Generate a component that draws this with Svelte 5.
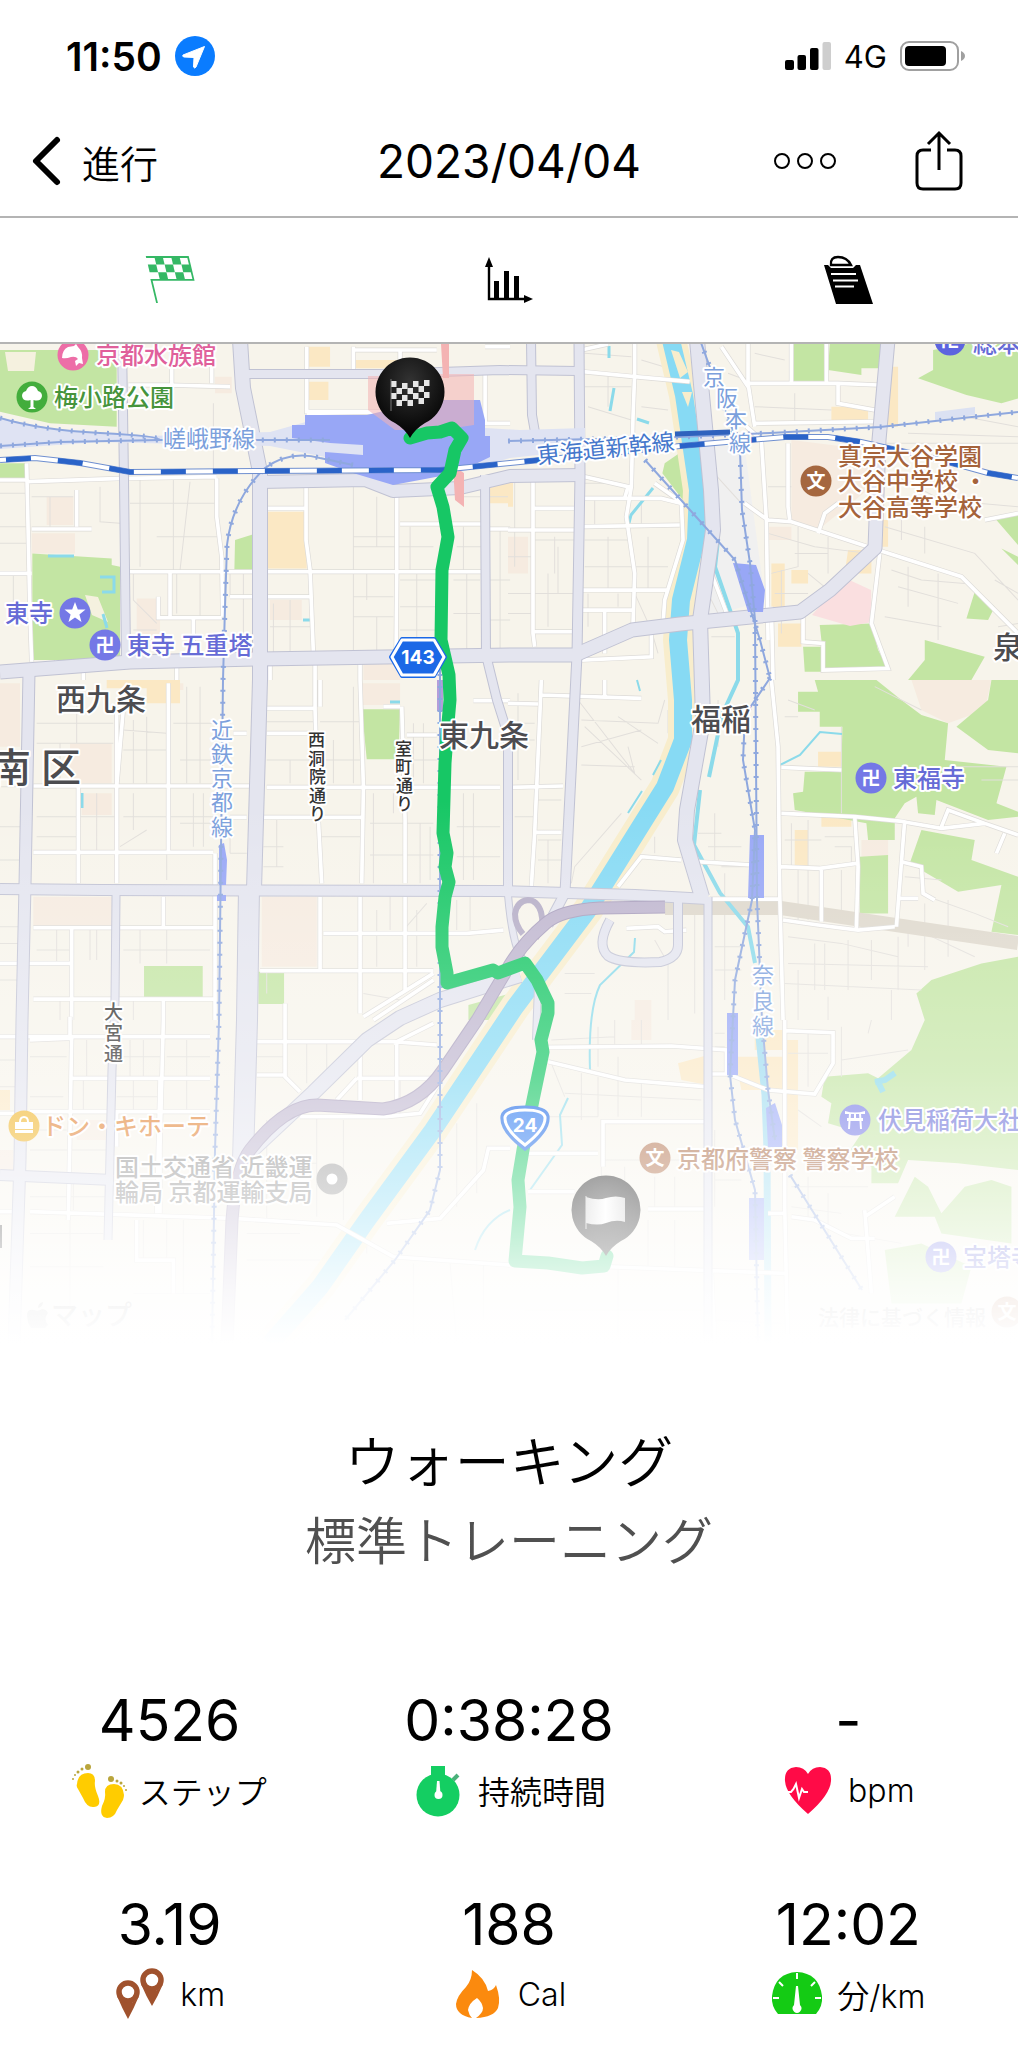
<script lang="ts">
	interface Label {
		text: string
		x: number
		cy: number
		tone: string
		size?: number
	}

	// six survey tiles, drawn at three units per map pixel
	const tiles = [
		{
			x: 0,
			y: 340,
			tint: 'M140 470H220V555H140ZM95 580H225V640H95ZM645 110H695V160H645ZM410 775H480V900H410ZM810 780H905V840H810ZM1090 960H1200V1020H1090Z',
			sand: 'M800 515H920V685H800ZM920 20H990V80H920ZM920 125H985V180H920ZM1060 60H1190V85H1060ZM1465 425H1530V490H1465Z',
			park: 'M0 30H350V260L150 250 0 215ZM0 370H75V418H0ZM97 640L335 655V675L360 680V960H97ZM705 600L760 583V688H703Z',
			lane: 'M0 460H80M150 470V560M95 470H220M300 440V545L360 550M420 420V680M520 420V690M570 425L540 690M640 190V400M385 290H700M385 200H500M390 490H650M470 590H660M1060 440V690M1130 470V620M1060 620H1300M1230 560V690M1060 590H1190M1370 470H1530M1390 560V690M1370 620H1450M1060 700V940M1060 770H1180M1100 700V780M1060 830H1180M1130 830V940M1200 720H1310M1200 800H1310M1200 870H1310M1250 700V940M1360 720H1440M1360 820H1440M1400 690V930M400 700V780L470 850M400 870H470M530 700V820M600 700V830M690 700V770M730 700V940M820 790V940M870 780V940M810 860H930M0 560H90M0 610H90M40 700V830M1470 720H1530M1470 840H1530M1500 570V930',
			street:
				'M0 420H80M80 370L90 830 95 965M80 425L370 415M230 450V560M95 567H275M0 700H95M385 415L650 410M650 415V530L665 650 668 830M515 20V150M635 20V130M385 135H500L690 140M510 695V830M580 830V955M475 770V833H665M385 695H1445M690 770H930M800 505H918M918 440V600L930 690 940 940M1190 460V700L1188 940M1200 552H1445M1465 567H1530M920 30V215H1140M920 110V20M1060 20V90M1060 30H1310M1200 30V90M920 220L1190 215M1455 100V250H1530M1455 20H1530M170 960V995M530 955V1020M250 960V1020M810 955V1020M945 940V1020M1080 940V1020'
		},
		{
			x: 508,
			y: 340,
			tint: 'M850 300L1090 330V440L930 570 850 540ZM0 590H60V700H0ZM780 560H850V600H780Z',
			sand: 'M970 200H1080V250H970ZM1125 80H1170V260H1130ZM1090 540H1140V620H1090ZM1020 630H1090V700H1010ZM790 670H830V820H790ZM850 690H900V730H850ZM810 850H880V920H810ZM0 420H15V500H0Z',
			park: 'M850 12H950V130H845ZM965 12H1125V85H1060V105L960 90ZM1275 30L1380 12H1530V175L1480 190 1375 165 1230 115 1275 90ZM520 335L540 500 463 400 470 370ZM1465 540L1530 525V615ZM1480 625L1530 650V675ZM1400 755L1460 800 1440 840 1375 835ZM935 855L1090 850 1110 930 1140 985 945 985 940 900ZM885 920H940V995H890ZM1250 900L1430 950 1390 1020H1200L1250 960Z',
			lane: 'M230 40L370 50M240 200L370 240M230 140H370M300 100V200M400 60L500 90M400 200L480 210M20 420V680M80 600H200M140 590V700M0 650H70M230 600H370M260 480V560M300 590V750M230 680H480M420 590V750M400 480V560M230 430H340M240 760V860M330 760V800M380 760L430 870 450 940M600 380L700 490M740 40L830 60M740 200L970 210M860 160V250M780 440H850M780 580L920 620 1080 640M870 560V680L790 700M960 590V700M1150 400L1300 480 1530 500M1180 520V600M1250 560V640M1130 560L1400 640 1530 780M1150 690L1240 720 1370 730M1170 740L1350 790M1200 680V800M1290 700V900M1130 830L1300 860M860 640H960M800 760H900M820 690V880M1200 280L1530 290M1370 230L1530 260M1130 310H1530M0 760H200M0 820H70M120 700V860M150 620V760M660 100L740 130M600 760L650 860M610 890H680M900 700L1010 790M1460 720L1530 760M1470 860L1530 850',
			street:
				'M220 30L300 12M225 95L380 110 545 125M380 12V100L375 230 370 440 355 530 380 700 375 850M720 12V130L740 260M720 130H990L1110 135M850 12V130M955 12V130M990 135V190L1100 210M740 250L1100 245M640 20L720 140M715 260L760 300 775 540 780 900M840 310V500L845 540M230 410L360 440 350 475M230 475H460L520 490 525 600 470 780 465 850M440 430L525 490M220 560L515 555M0 570H200M80 505H210M75 410V880L80 920M220 750H475M220 810H375M80 875H200M290 810V940M220 960L430 950 430 870M710 490L780 540 850 545 1110 630 1360 710 1440 790 1530 880M930 580L950 520 990 490M1115 640L1090 850 1140 985 945 990V910L885 905V830M790 800L795 1020M610 700L660 830M1430 540L1530 520'
		},
		{
			x: 0,
			y: 680,
			tint: 'M0 10H60V200H0ZM210 190H335V310H210ZM245 340H335V405H245ZM100 650H335V740H100ZM785 650H950V860H785ZM1085 10H1200V75H1085ZM500 10H550V30H500ZM1365 880H1460V910H1365Z',
			sand: 'M320 0H440V25H320ZM440 0H540V70H440Z',
			park: 'M1085 88H1200L1195 238H1100ZM432 858H608V955H432ZM775 875H852V972H775ZM1405 975L1530 940V1020H1405Z',
			lane: 'M0 320H60M0 440H60M0 540H60M110 130H340M110 190H340M180 190V310M230 30V190M110 410H345M290 340V510M110 470H230M370 150L500 160M370 210H500M400 120V310M440 110V310M560 20V310M600 20V310M540 240H650M520 130H650M370 410H640M580 340V500M610 340V500M540 430H640M440 450L360 500M400 340V450M500 520V600M690 520H740M690 410V520M800 125H940M800 240H940M870 240V310M1000 180V310M1060 20V310M960 125H1080M960 240H1080M960 470H1080M830 420V560M790 560H850M790 500H850M1120 340V610M1180 340V400M1110 430H1300M1110 525H1300M1260 430V610M1290 440V600M1390 340V600M1420 340V600M1370 440H1500M1370 530H1500M1240 130V310M1270 130V310M1230 240H1310M1130 690V860M1170 650V750M1250 690V860M1370 660V750M1410 650V750M1210 750L1280 670M170 750V850M270 750V840M290 750V840M110 810H210M420 750V850M500 750V850M370 810H630M180 960V1020M400 960V1020M0 740H60M0 790H60M0 900H60M1090 940L1200 960M800 940V870',
			street:
				'M100 318H750M800 322H1500M235 320V610M350 90V610M505 10V515M370 85L350 320M100 517H640M645 520V1020M790 85H940M945 0V90L955 420 965 610M1080 0L1090 320 1085 610M1205 80L1215 420V610M800 160H945M790 412H1085M690 412H740M700 160H740M1220 165H1310M1420 62H1530M100 743H640M0 850H210M215 745V1020M490 650V740M100 957H640M490 960V1020M960 650V870M1080 650V1000M1215 650V930M970 760H1400L1510 750M780 872H1300M1090 1010L1300 880M1120 1020L1300 900M855 970V1020M960 0V80M1150 80H1200'
		},
		{
			x: 508,
			y: 680,
			tint: 'M1210 0H1450L1430 90 1320 130 1240 90ZM1470 0H1530V50H1490ZM1060 480H1140V530H1060ZM380 960H430V1020H380Z',
			sand: 'M930 215H1000V260H930ZM860 450H900V560H860ZM940 400H1030V440H940Z',
			park: 'M920 0H1105L1180 60 1240 105 1320 130 1310 240 1495 260 1465 370 1530 395V410L1440 420 1285 360 1280 405 1230 400 1225 350 1190 370 1160 415V480H1080L1075 430 860 390 855 340 885 335 890 275H1000L1003 140H935V95H870V35H930ZM1450 0H1530V220L1440 210 1345 140 1440 60ZM1240 450L1400 480 1390 540 1530 590V765L1450 755 1480 615 1350 635 1205 550ZM1055 530L1140 525V700H1055ZM1270 900L1420 850 1530 830V1020H1250L1225 940Z',
			lane: 'M220 120L450 130 470 60M220 200L400 150M210 60L380 280 360 200M230 140L400 300M220 255L380 260M330 110L450 190M340 400L200 560 190 610M90 480H160M90 540H160M90 360H160M120 480V610M30 40V300M20 180H80M20 130H80M20 410H80M570 460H640M620 400V540M600 500H700M650 580V650M640 560H720M440 470V520M850 430V560M900 420V560M830 480H940M950 470H1040M980 500H1030V550M870 570V720M900 570V720M1000 570V720M1190 590L1300 600M1260 650L1400 700 1500 740M1250 670V870M1320 660V830M1200 750V800M1250 760L1400 830M840 770L1000 790 1170 830M920 790V930M950 790V930M1020 780V930M1090 780V900M1170 770V930M840 850L1260 860M830 910L1240 930M870 870V1020M960 950V1020M1150 930V1020M560 690V1000M650 700V960M620 800H700M620 870H700M170 880H260M170 940H250M440 780L480 850 480 1020M840 60L920 90M1340 260H1530M1420 300H1530M1100 20L1240 90M830 110H870M1000 140V400M630 60V200M480 90V160',
			street:
				'M0 70L90 72M100 0L80 460 70 620M100 45L400 55M290 0V50M10 322L165 318M80 457H160M330 620L400 530 520 540M565 545L735 555M605 657H810M790 0L810 200 815 640 825 1020M820 262L1000 270M820 400L1040 410 1190 425M1040 410L1050 560 1045 745M815 560L935 565 1045 550M940 570V725M825 720L930 735 1050 750 1160 740M1190 420L1165 740M1185 425L1300 445 1430 430 1320 390 1300 440M1430 430L1530 465M1490 460L1465 520M1180 545L1240 560 1245 640 1280 660M1170 655H1230M355 745L450 740 470 755 535 750'
		},
		{
			x: 0,
			y: 1020,
			tint: 'M0 390H40V460H0ZM230 300H320V360H230Z',
			sand: 'M0 210H30V270H0Z',
			park: '',
			lane: 'M0 120H50M0 200H50M90 110H200M260 60V170M390 60V170M430 60V170M350 110H480M500 110H630M560 60V170M90 230H190M250 180V280M350 230H480M400 180V280M560 180V280M770 110H850M920 70V190M980 70V160M1080 70H1280M1200 180V280M950 290V590M770 430H950M800 300V600M1030 300V600M1370 310V560M1430 250V520M90 330H200M90 390H320M90 530H320M220 490V570M430 600V720M500 600V720M550 600V820M90 640H310M90 740H310M210 590V900M400 820H630M1240 730V980M1350 730L1370 970M1450 730V900M1100 600V700M740 640H900M740 720H960',
			street:
				'M0 50H630M90 60L210 55V-10M215 55L205 600M490 0L480 380M210 175H630M480 180L470 580M770 65H1180L1310 75M855 0V170L900 215M770 165H850M900 290L1160 290 1260 280 1310 200M1080 70V240M1190 70V280M1070 175H1290M1010 240L1070 175M1180 70L1300 10M0 280H50M90 275H630M90 575L700 595 1010 615 1180 710 1530 735M0 575H50M410 600V720H520V820M1160 610L1320 595 1450 450 1465 385H1530M350 380V280M480 380V580'
		},
		{
			x: 508,
			y: 1020,
			tint: 'M370 0H430V60H370Z',
			sand: 'M510 130L600 105V195L520 180ZM680 110H830V210H700ZM830 60H870V390H830ZM740 30H830V90H740Z',
			park: 'M1250 0H1530V450L1350 430 1200 420 1170 490H1090V440L1020 400 1060 340 960 310 970 250 940 230 950 170 1080 160 1110 175 1210 90ZM1220 470L1260 500 1300 580 1370 500 1450 480 1510 500V670L1300 640 1280 590 1160 590ZM1130 690L1240 670 1390 740 1360 850H1150Z',
			lane: 'M130 60L320 50M320 0V80M270 20V140M400 0V80M130 130L170 230M220 160V300M270 170V290M330 110V290M400 190V290M170 220L580 240M280 310V560M120 290H270M620 40H650M620 80H650M840 100H960M900 40V200M1000 20V170M1000 120L1200 90M870 270L940 320M290 420H580M350 440V560M440 470V560M500 470V560M330 750V960M420 600V740M500 600V740M850 500H1080M900 470V600M960 520V650M850 560L1000 580M1010 640L1180 670M620 480H700M620 330V560M620 900L820 910M50 870H580M1080 40L1090 0',
			street:
				'M120 82L490 78 655 90V160L780 210 920 222 975 130V38L830 32M120 125L350 180 590 200M610 162H660M600 305H285V440M60 400H270M60 515L200 515M420 567H590M300 740L830 760M830 0V560L840 1020M780 580H830M1070 590L1160 530M1070 570L1090 820M850 590L920 600 1030 655H1100M610 750L620 960'
		}
	]

	const roads = [
		{ w: 14, d: 'M240 340L243 388 260 472 260 680 254 890' },
		{ w: 20, d: 'M249 888L247 1020 243 1160' },
		{ w: 8, d: 'M122 340L124 480 126 660' },
		{ w: 13, d: 'M0 672L130 662 260 659 510 655 575 655 632 630 680 624 800 612 830 590 875 548 879 440 888 340' },
		{ w: 8, d: 'M248 374L380 374 500 370 578 371' },
		{ w: 12, d: 'M260 482L365 480 393 491 460 488 510 476 582 475' },
		{ w: 8, d: 'M531 340L532 415 536 438M485 475L486 655 497 700 508 735 508 891' },
		{ w: 9, d: 'M579 340L580 475 577 655 565 893 548 925' },
		{ w: 14, d: 'M697 340L702 395 711 490 713 530 700 620 703 720 687 810 685 840 702 897' },
		{ w: 7, d: 'M708 897V1344' },
		{ w: 11, d: 'M29 672L25 885 22 1020 20 1160 14 1344' },
		{ w: 10, d: 'M0 889L100 890 500 891 635 895 708 899' },
		{ w: 7, d: 'M116 895L115 1000 112 1070 108 1240' },
		{ w: 10, d: 'M0 1175L113 1180' },
		{ w: 14, d: 'M520 975L440 1000 400 1018 367 1040 313 1093 250 1152' },
		{ w: 8, d: 'M610 920Q596 945 608 956 620 964 660 962 678 958 678 945L678 902' },
		{ w: 6, d: 'M508 895Q512 940 520 955L538 985 536 1040' }
	]

	const rails = [
		'M0 418Q40 430 100 433T160 440H330',
		'M0 446L60 442 160 440',
		'M353 465L320 458Q290 450 265 468 232 500 227 545L225 607 223 680 221 850 219 1020 215 1150 212 1344',
		'M508 441L680 437 770 433 880 427 1018 412',
		'M645 460L690 510 735 560 760 640 770 678',
		'M700 340L740 450 742 510 750 563 755 620 757 900 762 1020 768 1090 775 1140',
		'M770 678L745 715 743 760 755 830 752 900 735 980 730 1075 735 1120 755 1190 758 1344',
		'M790 1175L862 1290',
		'M440 650L440 1170 430 1210 395 1260 345 1320'
	]
	const shinkansen =
		'M0 460L35 458 80 463 130 472 260 471 440 470 510 463 680 446 785 437 828 437 861 442 941 460 988 473 1018 478'
	const river =
		'M671 340L684 395 698 490 696 540 681 600 678 640 683 700 683 740 665 787 615 867 588 910 515 1007 433 1130 367 1220 320 1287 270 1344'
	const expressway =
		'M665 907L600 908Q560 910 545 924 520 945 505 973L477 1020 443 1070Q420 1104 383 1109L317 1105Q285 1105 250 1150 236 1168 232 1220L227 1344'
	const loop = 'M536 938Q545 925 541 912 537 900 528 900 517 901 515 914 515 925 523 934'
	const route =
		'M410 438L427 433 440 432 452 428 462 438 455 450 450 473 437 487 443 507 448 537 442 570 441 640 449 675 450 700 448 723 445 763 443 833 447 853 445 867 449 882 445 897 442 927 442 947 447 973 447 983 493 970 498 973 525 963 537 980 548 1003 548 1013 541 1040 543 1052 533 1100 523 1150 518 1180 520 1207 515 1261 548 1263 582 1268 604 1266 607 1256'

	const labels: Label[] = [
		{ text: '京都水族館', x: 96, cy: 355, tone: 'pink' },
		{ text: '梅小路公園', x: 54, cy: 397, tone: 'green' },
		{ text: '嵯峨野線', x: 163, cy: 438, tone: 'rail', size: 23 },
		{ text: '東寺', x: 5, cy: 613, tone: 'violet' },
		{ text: '東寺 五重塔', x: 127, cy: 645, tone: 'violet' },
		{ text: '東福寺', x: 893, cy: 778, tone: 'violet' },
		{ text: '伏見稲荷大社', x: 878, cy: 1120, tone: 'violet' },
		{ text: '宝塔寺', x: 963, cy: 1257, tone: 'violet' },
		{ text: '総本山', x: 973, cy: 343, tone: 'violet' },
		{ text: '真宗大谷学園', x: 838, cy: 456, tone: 'brown' },
		{ text: '大谷中学校 ・', x: 838, cy: 481, tone: 'brown' },
		{ text: '大谷高等学校', x: 838, cy: 507, tone: 'brown' },
		{ text: '京都府警察 警察学校', x: 677, cy: 1159, tone: 'brown' },
		{ text: 'ドン・キホーテ', x: 42, cy: 1126, tone: 'orange' },
		{ text: '国土交通省 近畿運', x: 115, cy: 1167, tone: 'grey' },
		{ text: '輪局 京都運輸支局', x: 115, cy: 1192, tone: 'grey' },
		{ text: '西九条', x: 56, cy: 699, tone: 'area', size: 30 },
		{ text: '東九条', x: 439, cy: 735, tone: 'area', size: 30 },
		{ text: '福稲', x: 691, cy: 719, tone: 'area', size: 30 },
		{ text: '泉', x: 993, cy: 647, tone: 'area', size: 30 },
		{ text: '南', x: -9, cy: 767, tone: 'area', size: 40 },
		{ text: '区', x: 41, cy: 767, tone: 'area', size: 40 },
		{ text: 'マップ', x: 51, cy: 1315, tone: 'credit', size: 27 },
		{ text: '法律に基づく情報', x: 818, cy: 1317, tone: 'credit', size: 21 }
	]

	// x and y lists place each character of a label that follows its line
	const lineLabels = [
		{ text: '近鉄京都線', x: '211 211 211 211 211', y: '738 762 786 810 835', tone: 'rail', size: 22 },
		{ text: '奈良線', x: '752 752 752', y: '983 1009 1034', tone: 'rail', size: 22 },
		{ text: '京阪本線', x: '703 716 725 729', y: '385 406 427 451', tone: 'rail', size: 22 },
		{ text: '西洞院通り', x: '308 308 309 309 309', y: '746 765 783 802 820', tone: 'lane-name', size: 17 },
		{ text: '室町通り', x: '395 395 396 396', y: '755 773 792 810', tone: 'lane-name', size: 17 },
		{ text: '大宮通', x: '104 104 104', y: '1019 1040 1061', tone: 'lane-name', size: 19 }
	]

	const places = [
		{ x: 73, y: 355, icon: 'dolphin', fill: '#ed6ea7' },
		{ x: 32, y: 397, icon: 'tree', fill: '#43ad3c' },
		{ x: 75, y: 613, icon: 'star', fill: '#7478e6' },
		{ x: 105, y: 645, icon: '卍', fill: '#7478e6' },
		{ x: 871, y: 778, icon: '卍', fill: '#7478e6' },
		{ x: 941, y: 1257, icon: '卍', fill: '#7478e6' },
		{ x: 950, y: 340, icon: '卍', fill: '#5d64df' },
		{ x: 816, y: 481, icon: '文', fill: '#a5673f' },
		{ x: 655, y: 1158, icon: '文', fill: '#b06e48' },
		{ x: 1007, y: 1312, icon: '文', fill: '#b06e48' },
		{ x: 855, y: 1120, icon: 'torii', fill: '#7478e6' },
		{ x: 24, y: 1126, icon: 'bag', fill: '#f0b323' },
		{ x: 332, y: 1179, icon: 'dot', fill: '#999' }
	]

	const stats = [
		{ value: '4526', unit: 'ステップ', icon: 'steps' },
		{ value: '0:38:28', unit: '持続時間', icon: 'watch' },
		{ value: '-', unit: 'bpm', icon: 'heart' },
		{ value: '3.19', unit: 'km', icon: 'pins' },
		{ value: '188', unit: 'Cal', icon: 'flame' },
		{ value: '12:02', unit: '分/km', icon: 'gauge' }
	]

	const checks = [0, 1, 2].flatMap((row) => [0, 1, 2, 3, 4].map((col) => ({ row, col })).filter((c) => (c.row + c.col) % 2))
	const pinChecks = [0, 1, 2, 3].flatMap((row) => [0, 1, 2, 3, 4, 5, 6].map((col) => ({ row, col })).filter((c) => (c.row + c.col) % 2 === 0))
	const wave = [0, 1, 2, 1, 0, -1, -1]

	let tab = $state('course')
</script>

<div class="screen">
	<div class="status">
		<div class="status-side">
			<span class="clock">11:50</span>
			<svg width="40" height="40" viewBox="0 0 40 40" aria-hidden="true">
				<circle cx="20" cy="20" r="20" fill="#0a7cff" />
				<path d="M29.500 10.500L8 19Q7 20.500 9 21L19 21.500 18.500 31Q19.500 33 21 31Z" fill="#fff" stroke="#fff" stroke-linejoin="round" />
			</svg>
		</div>
		<div class="status-side">
			<svg width="46" height="30" viewBox="0 0 46 30" aria-hidden="true">
				<rect x="0" y="19" width="9" height="10" rx="2" />
				<rect x="12.500" y="14" width="8.500" height="15" rx="2" />
				<rect x="25" y="7" width="8.500" height="22" rx="2" />
				<rect x="37.500" y="1" width="8.500" height="28" rx="2" fill="#cecece" />
			</svg>
			<span class="network">4G</span>
			<svg width="66" height="32" viewBox="0 0 66 32" aria-hidden="true">
				<rect x="1" y="2" width="57" height="28" rx="8" fill="none" stroke="#a0a0a0" stroke-width="2" />
				<rect x="5" y="6" width="41" height="20" rx="4" />
				<path d="M61 11Q65 13 65 16T61 21Z" fill="#a0a0a0" />
			</svg>
		</div>
	</div>

	<header class="nav">
		<button class="back" type="button">
			<svg width="28" height="48" viewBox="0 0 28 48" aria-hidden="true">
				<path d="M25 3L4 24 25 45" fill="none" stroke="#000" stroke-width="6" stroke-linecap="round" stroke-linejoin="round" />
			</svg>
			進行
		</button>
		<h1>2023/04/04</h1>
		<div class="actions">
			<button type="button" aria-label="その他">
				<svg width="64" height="20" viewBox="0 0 64 20" fill="none" stroke="#000" stroke-width="2" aria-hidden="true">
					<circle cx="9" cy="10" r="7" />
					<circle cx="32" cy="10" r="7" />
					<circle cx="55" cy="10" r="7" />
				</svg>
			</button>
			<button type="button" aria-label="共有">
				<svg width="48" height="60" viewBox="0 0 48 60" fill="none" stroke="#000" stroke-width="3" aria-hidden="true">
					<path d="M16 19H8Q2 19 2 25V52Q2 58 8 58H40Q46 58 46 52V25Q46 19 40 19H32" />
					<path d="M24 39V2M13 13L24 2 35 13" />
				</svg>
			</button>
		</div>
	</header>

	<nav class="tabs">
		<button type="button" aria-label="コース" aria-pressed={tab === 'course'} onclick={() => (tab = 'course')}>
			<svg width="50" height="50" viewBox="0 0 50 50" aria-hidden="true">
				<g transform="matrix(1 0 .24 1 1 2)" fill="#35b865">
					{#each checks as c}
						<rect x={c.col * 8.4} y={c.row * 7.6} width="8.400" height="7.600" />
					{/each}
					<path d="M0 0H42V22.800H0V46" fill="none" stroke="#35b865" stroke-width="1.800" />
				</g>
			</svg>
		</button>
		<button type="button" aria-label="グラフ" aria-pressed={tab === 'chart'} onclick={() => (tab = 'chart')}>
			<svg width="50" height="50" viewBox="0 0 50 50" aria-hidden="true">
				<path d="M5 8V44H42" fill="none" stroke="#000" stroke-width="2.400" />
				<path d="M5 2L1 12H9ZM49 44L40 40V48ZM10 26H15V44H10ZM20 16H25V44H20ZM30 21H35V44H30Z" />
			</svg>
		</button>
		<button type="button" aria-label="メモ" aria-pressed={tab === 'notes'} onclick={() => (tab = 'notes')}>
			<svg width="50" height="50" viewBox="0 0 50 50" aria-hidden="true">
				<path d="M1 10L5 10 8 13H30L33 10H37L50 49H13Z" />
				<path d="M8 10Q7 2 15 2 24 2 28 10Z" fill="#fff" stroke="#000" stroke-width="2.400" />
				<path d="M8 19H33M10 25.500H35M12 31.500H31" stroke="#fff" stroke-width="2" />
			</svg>
		</button>
	</nav>

	<svg class="map" viewBox="0 344 1018 1000" role="img" aria-label="コースの地図">
		<defs>
			<linearGradient id="fade" gradientUnits="userSpaceOnUse" x1="0" y1="800" x2="0" y2="1344">
				<stop offset="0" stop-color="#fff" stop-opacity="0" />
				<stop offset="0.500" stop-color="#fff" stop-opacity="0.340" />
				<stop offset="0.740" stop-color="#fff" stop-opacity="0.660" />
				<stop offset="0.900" stop-color="#fff" stop-opacity="0.900" />
				<stop offset="1" stop-color="#fff" />
			</linearGradient>
			<radialGradient id="ball" cx="0.500" cy="0.300" r="0.700">
				<stop offset="0" stop-color="#333" />
				<stop offset="1" stop-color="#000" />
			</radialGradient>
			<linearGradient id="cloth">
				<stop offset="0" stop-color="#ccc" />
				<stop offset="0.500" stop-color="#fff" />
				<stop offset="1" stop-color="#ccc" />
			</linearGradient>
		</defs>

		<rect y="344" width="1018" height="1000" fill="#f7f4eb" />
		<path d="M702 440L745 450 765 600 700 620 712 530Z" fill="#f0f0f0" />
		{#each tiles as tile}
			<g transform="translate({tile.x} {tile.y}) scale(0.3334)">
				<path d={tile.tint} fill="#f6ebe0" />
				<path d={tile.sand} fill="#fbe8c4" />
				<path d={tile.park} fill="#c3e5a3" />
				<path class="lane" d={tile.lane} />
			</g>
		{/each}
		<path d="M5 352H36L34 371H8ZM85 595L98 597 108 622 92 615Z" fill="#f5f1df" />
		<path d="M845 578L871 590 872 622 850 626 812 615Z" fill="#fadfe0" />
		<path d="M665 908L781 908 1018 943" fill="none" stroke="#ded8cc" stroke-width="14" />

		<path d={river} fill="none" stroke="#f8edcc" stroke-width="30" stroke-linejoin="round" />
		<path d={river} fill="none" stroke="#87daf4" stroke-width="18" stroke-linejoin="round" />
		<path d="M671 350L679 352 688 372 680 378ZM682 392L692 392 688 407Z" fill="#f8edcc" />
		<g fill="none" stroke="#8bdaea" stroke-width="3">
			<path d="M718 540L715 567 738 633 738 680 722 715 709 777M700 790L694 845 720 893 748 927 755 963" stroke-width="4" />
			<path d="M609 346V358M614 388L610 411M637 419L649 423M653 488L631 515 629 523M48 556H74M303 620H310M390 702H400M82 793V808M100 577H114V592H102M103 614L107 628" />
			<path d="M637 680L640 691M661 760L653 775M642 791L628 813M780 765L800 755 820 732 842 734" stroke-width="2" />
			<path d="M635 938L634 952 600 985Q588 1010 590 1070M568 1098L560 1115 562 1145 530 1190M510 1210Q485 1220 475 1250" stroke-width="2" />
			<path d="M875 1082L885 1080 895 1073M877 1080L883 1092" stroke-width="6" />
		</g>
		<path d="M759 1037L765 1095 767 1150 768 1344" fill="none" stroke="#9fdcf0" stroke-width="7" />

		{#each tiles as tile}
			<g transform="translate({tile.x} {tile.y}) scale(0.3334)">
				<path class="street-edge" d={tile.street} />
				<path class="street" d={tile.street} />
			</g>
		{/each}

		<g class="road-edge">
			{#each roads as road}
				<path d={road.d} stroke-width={road.w + 2} />
			{/each}
		</g>
		<g class="road">
			{#each roads as road}
				<path d={road.d} stroke-width={road.w} />
			{/each}
		</g>
		<path d={loop} fill="none" stroke="#b5adc6" stroke-width="6" />
		<path d={expressway} fill="none" stroke="#a99fbd" stroke-width="13" />
		<path d={expressway} fill="none" stroke="#bfb6cf" stroke-width="11" />

		<path d="M0 418L60 430 150 436 270 432 320 418 520 430 585 428V450L510 458 450 475 390 478 330 458 270 446 100 442 0 449Z" fill="#dfe3f3" />
		<path d="M935 412L975 407V415L935 420Z" fill="#dbe1f2" />
		<path d="M305 415H367L430 400H480L485 420V436H490V457L457 473 393 485 353 473 325 463V452L363 455V445L330 443 292 438V425H305Z" fill="#98a7f6" />
		<path d="M368 376H400L440 374H474V425L440 430H395L368 410Z" fill="#f4b3b3" opacity="0.550" />
		<path d="M441 344H449V378L443 378ZM453 466L464 473V507L455 500Z" fill="#f4b3b3" />
		<g fill="#98a7f6">
			<path d="M733 563L756 565 765 590 763 612H748ZM750 835H764V898H748ZM727 1013H738V1075H727ZM766 1108L775 1103 782 1125V1147H768ZM749 1198H764V1260H749ZM219 845L224 843 227 860 226 885H219ZM217 895H226V901H217Z" />
			<path d="M437 680H443V711H437Z" fill="#b39ddb" />
		</g>

		{#each rails as d}
			<path class="rail" {d} />
			<path class="ties" {d} />
		{/each}
		<g fill="none">
			<path d="M675 434L730 432" stroke="#2f62bd" stroke-width="5" />
			<path d={shinkansen} stroke="#6f8fd0" stroke-width="6" />
			<path d={shinkansen} stroke="#fff" stroke-width="4" />
			<path d={shinkansen} stroke="#2a63c8" stroke-width="5" stroke-dasharray="25 27" stroke-dashoffset="-6" />
		</g>

		<path d={route} fill="none" stroke="#17c765" stroke-width="13" stroke-linejoin="round" stroke-linecap="round" />

		{#each labels as label}
			{@const size = label.size ?? 24}
			<text class="label {label.tone}" x={label.x} y={label.cy + Math.round(size * 0.37)} font-size={size}>{label.text}</text>
		{/each}
		{#each lineLabels as label}
			<text class="label {label.tone}" x={label.x} y={label.y} font-size={label.size}>{label.text}</text>
		{/each}
		<text class="label rail-strong" transform="translate(538 464) rotate(-6)" font-size="23">東海道新幹線</text>

		{#each places as place}
			<g transform="translate({place.x} {place.y})" fill="#fff">
				<circle r="15.500" fill={place.fill} />
				{#if place.icon === 'dolphin'}
					<path d="M-11 3Q-11-5-5-8L1-9 3-11 5-8Q10-3 9 3L10 9 6 8 3 11 2 6 5 4Q3 1-2 2-7 4-11 3Z" />
				{:else if place.icon === 'tree'}
					<path d="M-1.500 10L-1.500 3Q-9 5-10-1-10-5-6-6-4-11 0-11T6-6Q10-5 10-1 9 5 1.500 3L1.500 10 4 12H-4Z" />
				{:else if place.icon === 'star'}
					<path d="M0-11L2.800-3.600 10.500-3.400 4.400 1.500 6.500 9 0 4.600-6.500 9-4.400 1.500-10.500-3.400-2.800-3.600Z" />
				{:else if place.icon === 'torii'}
					<path d="M-10-9Q0-6 10-9V-6H-10ZM-8-2H8V1H-8ZM-6-7H-4L-5 9H-7ZM4-7H6L7 9H5ZM-1-6H1V-2H-1Z" />
				{:else if place.icon === 'bag'}
					<path d="M-9-4H9V3H-9ZM-9 4H9V7H-9Z" />
					<path d="M-4-4Q-4-9 0-9T4-4" fill="none" stroke="#fff" stroke-width="2" />
				{:else if place.icon === 'dot'}
					<circle r="5.500" />
				{:else}
					<text class="glyph" y="7" font-size="19" text-anchor="middle">{place.icon}</text>
				{/if}
			</g>
		{/each}

		<path d="M27 1315Q27 1309 34 1310 38 1312 42 1309 46 1309 48 1313 43 1319 48 1325L45 1328H31Q27 1322 27 1315ZM38 1308Q38 1303 43 1302 43 1307 38 1308Z" fill="#999" />
		<path d="M0 1225H2V1248H0Z" fill="#444" />

		<path d="M402 639H434L445 657 434 676H402L391 657Z" fill="#1b68e6" stroke="#1b68e6" stroke-width="4" stroke-linejoin="round" />
		<path d="M402 640H434L444 657 434 675H402L392 657Z" fill="none" stroke="#fff" stroke-width="3" stroke-linejoin="round" />
		<text class="shield" x="418" y="664" font-size="19">143</text>
		<path d="M525 1108Q545 1108 547 1116 549 1130 525 1148 501 1130 503 1116 505 1108 525 1108Z" fill="#1b68e6" stroke="#1b68e6" stroke-width="5" />
		<path d="M525 1110Q543 1110 545 1117 546 1129 525 1145 504 1129 505 1117 507 1110 525 1110Z" fill="#2a78f0" stroke="#fff" stroke-width="3" />
		<text class="shield" x="525" y="1132" font-size="19">24</text>

		<g transform="translate(410 392)">
			<path d="M0 46Q-5 37-15 31A34.500 34.500 0 1 1 15 31Q5 37 0 46Z" fill="url(#ball)" />
			<g transform="translate(-19 -11)" fill="#e6e6e6">
				{#each pinChecks as c}
					<rect x={c.col * 5.5} y={c.row * 6 + wave[c.col]} width="5.500" height="6" />
				{/each}
				<path d="M0-2V30" stroke="#777" />
			</g>
		</g>
		<g transform="translate(606 1210)">
			<path d="M0 46Q-5 37-15 31A34.500 34.500 0 1 1 15 31Q5 37 0 46Z" fill="url(#ball)" />
			<path d="M-20-13Q-8-9 0-12 10-15 19-12V12Q10 9 0 13-8 16-20 13Z" fill="url(#cloth)" />
			<path d="M-20-14V19" stroke="#ccc" />
		</g>

		<rect y="800" width="1018" height="546" fill="url(#fade)" />
	</svg>

	<main>
		<h2>ウォーキング</h2>
		<p class="kind">標準トレーニング</p>

		<dl class="stats">
			{#each stats as stat}
				<div class="stat">
					<dd>{stat.value}</dd>
					<dt>
						<svg width="52" height="52" viewBox="0 0 52 52" aria-hidden="true">
							{#if stat.icon === 'steps'}
								<g fill="#fc0">
									<path d="M4 20Q5 9 15 9 22 9 22 17 21 23 25 32 29 42 21 43 14 44 10 34L5 25Q3 22 4 20Z" />
									<path d="M51 31Q50 20 41 20 32 20 32 28 33 34 29 42 26 53 34 54 41 54 44 46L50 36Q51 33 51 31Z" />
									<g fill="#b9a53c">
										<circle cx="15" cy="3" r="3" />
										<circle cx="9" cy="5" r="1.500" />
										<circle cx="5" cy="8" r="1.500" />
										<circle cx="2" cy="11" r="1" />
										<circle cx="0" cy="15" r="1" />
										<circle cx="38" cy="15" r="3" />
										<circle cx="44" cy="17" r="1.500" />
										<circle cx="48" cy="19" r="1.500" />
										<circle cx="51" cy="22" r="1" />
										<circle cx="53" cy="26" r="1" />
									</g>
								</g>
							{:else if stat.icon === 'watch'}
								<g fill="#14ce62">
									<circle cx="26" cy="31" r="21.500" />
									<path d="M19 2H33V14H19Z" />
								</g>
								<path d="M41 16L46 11" stroke="#4bb07a" stroke-width="4" />
								<path d="M25 17H27.500L28.500 30H24Z" fill="#fff" />
								<circle cx="26.500" cy="31" r="4" fill="#fff" />
							{:else if stat.icon === 'heart'}
								<path d="M26 50Q4 31 3 17 2 4 14 3 22 3 26 10 30 3 38 3 50 4 49 17 48 31 26 50Z" fill="#ff0b47" />
								<path d="M4 28H9L11.500 25 14 20 17 34 20 25 22 28H26" fill="none" stroke="#fff" stroke-width="2" />
							{:else if stat.icon === 'pins'}
								<g fill="none" stroke="#a0522d" stroke-width="5.500">
									<circle cx="14" cy="24" r="9" />
									<circle cx="38" cy="12" r="9" />
								</g>
								<path d="M3 28Q8 34 14 35T25 28Q20 40 14 51 8 40 3 28ZM27 16Q32 22 38 23T49 16Q44 28 38 38 32 28 27 16Z" fill="#a0522d" />
							{:else if stat.icon === 'flame'}
								<path d="M20 50Q4 47 4 36 5 28 14 19 20 12 20 2 33 10 36 23 42 22 44 17 49 31 46 40 42 49 24 50 31 45 31 40 30 34 25 30 17 35 16 42 17 47 20 50Z" fill="#fb8a0e" />
							{:else}
								<path d="M7 46Q0 38 1 28 4 5 26 4 48 5 51 28 52 38 45 46Z" fill="#14cb14" />
								<path d="M26 5V11M8 14L12 18M44 14L40 18M2 30H8M44 30H50" stroke="#fff" stroke-width="2" />
								<path d="M25 18H27L29 37Q31 39 30.500 41 29 45 26 45T21.500 41Q21 39 23 37Z" fill="#fff" />
							{/if}
						</svg>
						{stat.unit}
					</dt>
				</div>
			{/each}
		</dl>
	</main>
</div>

<style>
	:global(body) {
		background: #fff;
	}
	.screen {
		color: #000;
		font-family: Inter, 'Noto Sans CJK JP', sans-serif;
		overflow: hidden;
	}
	svg {
		display: block;
		flex: none;
		overflow: visible;
	}
	button {
		padding: 0;
		border: 0;
		background: none;
		color: inherit;
		font: inherit;
		cursor: pointer;
	}

	.status {
		display: flex;
		justify-content: space-between;
		align-items: center;
		height: 112px;
		padding: 0 52px 0 66px;
	}
	.status-side {
		display: flex;
		align-items: center;
		gap: 13px;
	}
	.clock {
		font-size: 39px;
		font-weight: 600;
	}
	.network {
		font-size: 31px;
	}

	.nav {
		display: grid;
		grid-template-columns: 1fr auto 1fr;
		align-items: center;
		box-sizing: border-box;
		height: 106px;
		padding: 0 32px 6px;
		border-bottom: 2px solid #b4b4b4;
	}
	.back {
		display: flex;
		align-items: center;
		gap: 22px;
		font-size: 38px;
		font-weight: 350;
	}
	h1 {
		margin: 0;
		font-size: 46px;
		font-weight: 400;
	}
	.actions {
		display: flex;
		justify-content: flex-end;
		align-items: center;
		gap: 78px;
		padding-right: 23px;
	}

	.tabs {
		display: grid;
		grid-template-columns: repeat(3, 1fr);
		height: 124px;
		border-bottom: 2px solid #b4b4b4;
	}
	.tabs button {
		display: grid;
		place-items: center;
	}

	.map {
		width: 100%;
		height: auto;
		overflow: hidden;
	}
	.lane {
		fill: none;
		stroke: #e2dfdb;
		stroke-width: 3;
	}
	.street-edge {
		fill: none;
		stroke: #dddbd8;
		stroke-width: 15;
	}
	.street {
		fill: none;
		stroke: #fff;
		stroke-width: 11;
	}
	.road-edge {
		fill: none;
		stroke: #c0c2d3;
		stroke-linejoin: round;
	}
	.road {
		fill: none;
		stroke: #e4e5ef;
		stroke-linejoin: round;
	}
	.rail {
		fill: none;
		stroke: #8fa8de;
		stroke-width: 2;
	}
	.ties {
		fill: none;
		stroke: #8fa8de;
		stroke-width: 5;
		stroke-dasharray: 2 10;
	}

	.label {
		font-family: 'Noto Sans CJK JP', sans-serif;
		font-weight: 500;
		stroke: #fff;
		stroke-width: 4px;
		stroke-linejoin: round;
		paint-order: stroke;
	}
	.pink {
		fill: #e0609b;
	}
	.green {
		fill: #46943c;
	}
	.violet {
		fill: #666bd6;
	}
	.brown {
		fill: #a5633b;
	}
	.orange {
		fill: #e07c28;
	}
	.grey {
		fill: #8c8c8c;
	}
	.area {
		fill: #4c4c50;
	}
	text.rail {
		fill: #7ba0dc;
		stroke: #fff;
		stroke-width: 4px;
		font-weight: 400;
	}
	.rail-strong {
		fill: #4678cc;
		font-weight: 400;
	}
	.lane-name {
		fill: #333;
	}
	.credit {
		fill: #888;
		stroke: none;
	}
	.glyph {
		font-family: 'Noto Sans CJK JP', sans-serif;
		font-weight: 700;
	}
	.shield {
		fill: #fff;
		font-weight: 700;
		text-anchor: middle;
	}

	main {
		padding: 78px 0 24px;
		text-align: center;
	}
	h2 {
		margin: 0;
		font-size: 55px;
		font-weight: 350;
		line-height: 80px;
	}
	.kind {
		margin: 0;
		color: #505050;
		font-size: 51px;
		font-weight: 350;
		line-height: 80px;
	}
	.stats {
		display: grid;
		grid-template-columns: repeat(3, 1fr);
		row-gap: 66px;
		margin: 98px 0 0;
	}
	.stat {
		display: flex;
		flex-direction: column;
	}
	dd {
		margin: 0;
		font-size: 57px;
		line-height: 82px;
	}
	dt {
		display: flex;
		justify-content: center;
		align-items: center;
		gap: 14px;
		height: 56px;
		font-size: 32px;
		font-weight: 350;
	}
</style>
